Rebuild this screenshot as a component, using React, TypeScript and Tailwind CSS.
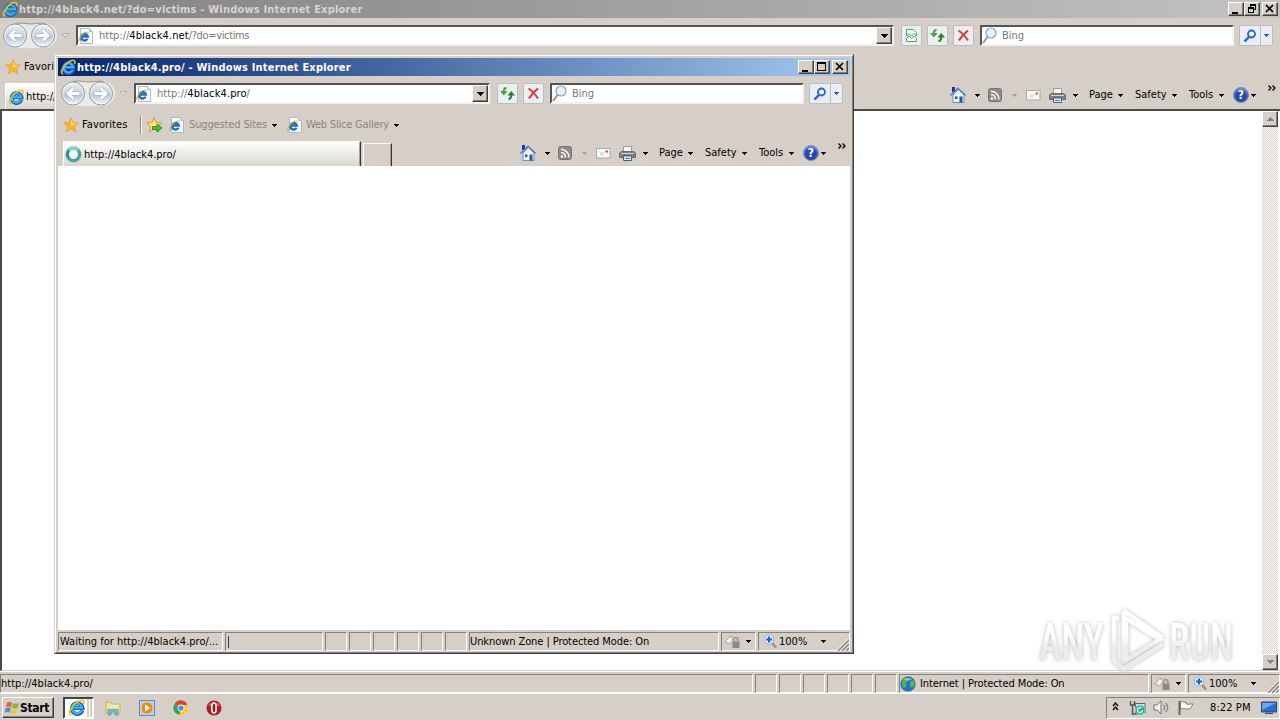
import type { ReactNode } from 'react';
import { clsx } from 'clsx';

const raised = 'border border-t-white border-l-white border-r-[#404040] border-b-[#404040] shadow-[inset_-1px_-1px_0_#808080]';
const field = 'border-2 border-t-[#555] border-l-[#555] border-r-[#f4f2ee] border-b-[#f4f2ee] bg-white';

function Caret({ className = 'text-black' }: { className?: string }) {
  return (
    <svg width="5" height="3" className={clsx('shrink-0', className)} shapeRendering="crispEdges">
      <path d="M0 0h5v1H4v1H3v1H2V2H1V1H0z" fill="currentColor" />
    </svg>
  );
}

function IeLogo({ size = 16 }: { size?: number }) {
  return (
    <svg width={size} height={size} viewBox="0 0 16 16" className="shrink-0">
      <path d="M13.4 10.6A5 5 0 1 1 13.6 8.4H5.4" fill="none" stroke="#1765b8" strokeWidth="3.8" />
      <path d="M12.800 10.800A4.700 4.700 0 1 1 13.200 8.300H5" fill="none" stroke="#45b4f0" strokeWidth="1.900" />
      <path d="M3.2 15C-.3 14.5 2 8.6 6.2 4.8 10 1.3 14 .2 14.8 2.2c.3.8.1 1.7-.4 2.6" fill="none" stroke="#e9bd26" strokeWidth="1.600" />
      <path d="M2 12.500C2.600 9.500 5 6 8 3.600" fill="none" stroke="#a3c94a" strokeWidth=".9" />
    </svg>
  );
}

function IePage() {
  return (
    <svg width="16" height="16" viewBox="0 0 16 16" className="shrink-0">
      <path d="M2.5.5h9l3 3v12h-12z" fill="#fff" stroke="#a9b8cc" />
      <path d="M11.5.5v3h3" fill="#dce6f2" stroke="#a9b8cc" />
      <path d="M9.500 10.800A3.300 3.300 0 1 1 9.800 8.600H3.500" fill="none" stroke="#1c6cc0" strokeWidth="2.400" />
      <path d="M1.200 13.600C-.4 12.600 3 6.600 6.500 4.700c2-1 3.800-1 3.800.6" fill="none" stroke="#d9ae2c" strokeWidth="1.200" />
    </svg>
  );
}

function StarIcon({ add = false }: { add?: boolean }) {
  return (
    <svg width="17" height="16" viewBox="0 0 17 16" className="shrink-0">
      <path d="M8 .8l2.1 4.8 5.2.5-3.9 3.5 1.2 5.2L8 12.1l-4.6 2.700 1.200-5.200L.7 6.100l5.200-.5z" fill={add ? '#fbe18a' : '#fdb62b'} stroke={add ? '#d98a12' : '#e0a040'} strokeWidth=".8" />
      <path d="M8 2.800l1.400 3.400 3.600.4-5 2z" fill="#ffe79a" />
      {add && <path d="M6.500 9.500H11V7l5 4-5 4v-2.500H6.500z" fill="#4cc03c" stroke="#23831e" strokeWidth=".8" />}
    </svg>
  );
}

function NavButtons() {
  return (
    <svg width="57" height="27" viewBox="0 0 57 27" className="shrink-0">
      <defs>
        <linearGradient id="nav" x1="0" y1="0" x2="0" y2="1">
          <stop offset="0" stopColor="#eef0f3" />
          <stop offset=".45" stopColor="#cdd5de" />
          <stop offset=".55" stopColor="#b4c4d5" />
          <stop offset="1" stopColor="#f4fafe" />
        </linearGradient>
      </defs>
      <path d="M13 1.500C22 .5 24 2 28.500 2S36 .5 43 1.500A12 12 0 0 1 43 25.500C36 26.500 20 26.500 13 25.500A12 12 0 0 1 13 1.500" fill="#eceae7" />
      <path d="M13 1.500C22 .5 24 2 28.500 2S36 .5 43 1.500" fill="none" stroke="#97948f" />
      {[13, 41].map((cx) => (
        <g key={cx}>
          <circle cx={cx} cy="13.500" r="11.500" fill="url(#nav)" stroke="#8f979f" />
          <circle cx={cx} cy="13.500" r="10.300" fill="none" stroke="#fff" strokeOpacity=".7" />
        </g>
      ))}
      <g fill="none" stroke="#a2b0c0" strokeWidth="4">
        <path d="M19.500 13.500H8.500M13 8.500l-5 5 5 5" />
        <path d="M34.500 13.500h11M41 8.500l5 5-5 5" />
      </g>
      <g fill="none" stroke="#fff" strokeWidth="2.800">
        <path d="M19.500 13.500H8.500M13 8.500l-5 5 5 5" />
        <path d="M34.500 13.500h11M41 8.500l5 5-5 5" />
      </g>
    </svg>
  );
}

function ToolButton({ children }: { children: ReactNode }) {
  return (
    <div className="flex h-[21px] w-[21px] shrink-0 items-center justify-center rounded-[2px] border border-[#b9bcc4] bg-[#eceef2]">
      {children}
    </div>
  );
}

function CompatIcon() {
  return (
    <svg width="13" height="15" viewBox="0 0 13 15">
      <path d="M1.500 8V1.500h7l3 3V8L9 5.500 6.500 8 4 5.500zM1.500 10.500L4 8l2.500 2.500L9 8l2.500 2.500v3h-10z" fill="#f4fff2" stroke="#4da455" />
    </svg>
  );
}

function RefreshIcon() {
  return (
    <svg width="15" height="13" viewBox="0 0 15 13">
      <path d="M6.500 1C4.500 1 3.800 2 3.800 5" fill="none" stroke="#3fa545" strokeWidth="2" />
      <path d="M0 4h7.500L3.800 8.500z" fill="#3fa545" />
      <path d="M8.500 12c2 0 2.700-1 2.700-4" fill="none" stroke="#23842b" strokeWidth="2" />
      <path d="M7.500 8.500H15L11.200 4z" fill="#23842b" />
    </svg>
  );
}

function StopIcon() {
  return (
    <svg width="13" height="13" viewBox="0 0 13 13">
      <path d="M1.500 1.500C4 3 8 7 11 11.500M11 1.500C8 4 4 8 2 11.500" fill="none" stroke="#d04045" strokeWidth="2" />
    </svg>
  );
}

function SearchIcon({ blue = false }: { blue?: boolean }) {
  return blue ? (
    <svg width="14" height="14" viewBox="0 0 14 14">
      <circle cx="8.500" cy="5" r="3.500" fill="#f6faff" stroke="#2c62cf" strokeWidth="1.800" />
      <path d="M6 7.800l-4.500 4.700" stroke="#2c62cf" strokeWidth="2.400" />
    </svg>
  ) : (
    <svg width="16" height="17" viewBox="0 0 16 17" className="shrink-0">
      <circle cx="9" cy="6" r="5" fill="#e3f3fb" stroke="#8fa0b0" strokeWidth="1.200" />
      <path d="M5.500 10L1 16" stroke="#999" strokeWidth="2" />
    </svg>
  );
}

function HomeIcon() {
  return (
    <svg width="16" height="16" viewBox="0 0 16 16" className="shrink-0">
      <path d="M3 8v7.500h11V8L8.500 2.500z" fill="#e9f3fc" stroke="#7490b4" />
      <path d="M2 0h3v5H2z" fill="#24339a" />
      <path d="M.5 8.500L8 1.500l7.500 7" fill="none" stroke="#5f80bd" strokeWidth="1.700" />
      <path d="M5 9.500h2.500V12H5zM9.500 9.500h3v6h-3z" fill="#2f5790" />
    </svg>
  );
}

function RssIcon() {
  return (
    <svg width="14" height="14" viewBox="0 0 14 14" className="shrink-0">
      <rect x=".5" y=".5" width="13" height="13" rx="2" fill="#8d8b88" stroke="#747474" />
      <circle cx="4" cy="10.500" r="1.300" fill="#fff" />
      <path d="M3 6.500A4.500 4.500 0 0 1 7.500 11.500M3 3.300a8 8 0 0 1 8 8.200" fill="none" stroke="#fff" strokeWidth="1.400" />
    </svg>
  );
}

function MailIcon() {
  return (
    <svg width="15" height="11" viewBox="0 0 15 11" className="shrink-0">
      <rect x=".5" y=".5" width="13.500" height="9.500" fill="#f8f8f6" stroke="#aaa9a6" />
      <path d="M9.500 2.500H12V4.500H9.500z" fill="#d4474f" />
      <path d="M4 5h4M4 7h3" stroke="#ccc" />
    </svg>
  );
}

function PrinterIcon() {
  return (
    <svg width="17" height="15" viewBox="0 0 17 15" className="shrink-0">
      <path d="M4.500.5h8V6h-8z" fill="#fafafa" stroke="#9a9a9a" />
      <path d="M.5 7l2-1.500h12l2 1.500v4.500H.5z" fill="#7d8084" stroke="#66696d" />
      <path d="M2 7.500h13" stroke="#d0d3d6" />
      <path d="M4.500 10h8v4.500h-8z" fill="#e8f1fa" stroke="#4c5c70" />
      <path d="M6 12.500h5" stroke="#4677a5" />
    </svg>
  );
}

function HelpIcon() {
  return (
    <span className="flex h-4 w-4 shrink-0 items-center justify-center rounded-full border border-[#7c8cb8] bg-[#2448ae] text-[12px] leading-none font-bold text-white shadow-[inset_0_1px_2px_#9db8f2]">
      ?
    </span>
  );
}

function WindowButton({ kind }: { kind: 'min' | 'max' | 'restore' | 'close' }) {
  return (
    <div className={clsx('h-[14px] w-4 bg-[#d5cfc7]', raised, kind === 'close' && 'ml-[2px]')}>
      <svg width="14" height="12" viewBox="0 0 14 12" shapeRendering={kind === 'close' ? 'auto' : 'crispEdges'}>
        {kind === 'min' && <path d="M3 9h6v2H3z" />}
        {kind === 'max' && <path d="M2 1h9v9H2zM3 3v6h7V3z" fillRule="evenodd" />}
        {kind === 'restore' && (
          <path d="M5 1h6v6H9V6h1V3H6v1H5zM3 4h6v6H3zM4 6v3h4V6z" fillRule="evenodd" />
        )}
        {kind === 'close' && <path d="M3 2l7 7M10 2L3 9" stroke="#000" strokeWidth="1.700" />}
      </svg>
    </div>
  );
}

interface BrowserProps {
  title: string;
  host: string;
  path: string;
  active?: boolean;
}

function TitleBar({ title, active }: { title: string; active?: boolean }) {
  return (
    <div
      className={clsx(
        'flex h-[18px] shrink-0 items-center bg-linear-to-r pr-[2px] pl-[2px]',
        active ? 'from-[#0a246a] to-[#a6caf0] text-white' : 'from-[#808080] to-[#c3c3c3] text-[#d8d4cc]'
      )}
    >
      <IeLogo />
      <span className="ml-px grow pt-px text-[11px] font-bold tracking-[0.19px] whitespace-nowrap">{title}</span>
      <WindowButton kind="min" />
      <WindowButton kind={active ? 'max' : 'restore'} />
      <WindowButton kind="close" />
    </div>
  );
}

function AddressRow({ host, path, active }: BrowserProps) {
  return (
    <div className="flex h-[35px] shrink-0 items-center pr-[7px] pl-[2px]">
      <NavButtons />
      <svg width="9" height="6" className="ml-[2px] shrink-0">
        <path d="M1 .5h7L4.500 4.500z" fill="#e5e2dc" stroke="#b3aea6" />
      </svg>
      <div className={clsx('ml-[6px] flex h-[21px] grow items-center', field)}>
        <IePage />
        <span className="ml-[5px] grow whitespace-nowrap text-[#777]">
          http://<span className="tracking-[0.1px] text-black">{host}</span>
          <span className="tracking-[-0.35px]">{path}</span>
        </span>
        <div className={clsx('flex h-[17px] w-4 items-center justify-center bg-[#d5cfc7]', raised)}>
          <svg width="7" height="4" shapeRendering="crispEdges">
            <path d="M0 0h7v1H6v1H5v1H4v1H3V3H2V2H1V1H0z" />
          </svg>
        </div>
      </div>
      <div className="mr-[6px] ml-[7px] flex gap-[5px]">
        {!active && <ToolButton><CompatIcon /></ToolButton>}
        <ToolButton><RefreshIcon /></ToolButton>
        <ToolButton><StopIcon /></ToolButton>
      </div>
      <div className={clsx('flex h-[21px] w-[254px] shrink-0 items-center', field)}>
        <SearchIcon />
        <span className="ml-[4px] text-[#777]">Bing</span>
      </div>
      <div className="ml-[5px] flex h-[21px] w-[34px] shrink-0 items-center rounded-[2px] border border-[#b9bcc4] bg-[#e9edf6]">
        <div className="flex h-full w-[21px] items-center justify-center border-r border-[#b9bcc4]"><SearchIcon blue /></div>
        <div className="flex grow justify-center"><Caret className="text-[#2c5cb8]" /></div>
      </div>
    </div>
  );
}

function FavoritesRow() {
  return (
    <div className="flex h-[28px] shrink-0 items-center pl-[5px] whitespace-nowrap">
      <StarIcon />
      <span className="ml-[2px] w-[46px] tracking-[0.1px]">Favorites</span>
      <div className="ml-[12px] h-[18px] w-[2px] border-l border-[#8d8984] bg-white" />
      <div className="ml-[4px]"><StarIcon add /></div>
      <div className="ml-[6px]"><IePage /></div>
      <span className="ml-[4px] w-[78px] tracking-[-0.13px] text-[#8a8681]">Suggested Sites</span>
      <div className="ml-[5px]"><Caret /></div>
      <div className="ml-[10px]"><IePage /></div>
      <span className="ml-[3px] w-[83px] tracking-[-0.2px] text-[#8a8681]">Web Slice Gallery</span>
      <div className="ml-[5px]"><Caret /></div>
    </div>
  );
}

function TabRow({ host, path, active }: BrowserProps) {
  return (
    <div className="flex h-[28px] shrink-0 items-end pl-[5px]">
      <div className="flex h-[26px] w-[298px] items-center border-t border-r border-l border-t-white border-l-white border-r-[#333] bg-linear-to-b from-white to-[#d9d4cd] pl-[2px] shadow-[inset_-1px_0_0_#a5a19b]">
        {active ? (
          <div className="mr-px h-[15px] w-[15px] shrink-0 rounded-full border-[3px] border-[#3fa5a0] border-t-[#85cbc8] border-l-[#2c8f8c] bg-[#eef9f8] shadow-[0_0_0_1px_#b7c9c8]" />
        ) : (
          <IeLogo />
        )}
        <span className="ml-[2px] whitespace-nowrap">http://{host}{path}</span>
      </div>
      <div className="ml-[2px] h-[24px] w-[29px] border-t border-r border-l border-t-white border-l-white border-r-[#333] shadow-[inset_-1px_0_0_#a5a19b]" />
      <div className="grow" />
      <div className="flex h-[28px] items-center pr-[4px]">
        <HomeIcon />
        <div className="ml-[9px]"><Caret /></div>
        <div className="ml-[8px]"><RssIcon /></div>
        <div className="ml-[10px]"><Caret className="text-[#aaa49c]" /></div>
        <div className="ml-[9px]"><MailIcon /></div>
        <div className="ml-[8px]"><PrinterIcon /></div>
        <div className="ml-[7px]"><Caret /></div>
        <span className="ml-[11px] w-[26px]">Page</span>
        <div className="ml-[3px]"><Caret /></div>
        <span className="ml-[12px] w-[33px]">Safety</span>
        <div className="ml-[4px]"><Caret /></div>
        <span className="ml-[12px] w-[27px]">Tools</span>
        <div className="ml-[3px]"><Caret /></div>
        <div className="ml-[9px]"><HelpIcon /></div>
        <div className="ml-[2px]"><Caret /></div>
        <svg width="8" height="6" className="mb-[14px] ml-[12px]">
          <path d="M.5.500L3 3 .500 5.500M4.500.500L7 3 4.500 5.500" fill="none" stroke="#000" strokeWidth="1.300" />
        </svg>
      </div>
    </div>
  );
}

function Toolbars(props: BrowserProps) {
  return (
    <>
      <TitleBar title={props.title} active={props.active} />
      <AddressRow {...props} />
      <FavoritesRow />
      <TabRow {...props} />
    </>
  );
}

function Pane({ className, children }: { className: string; children?: ReactNode }) {
  return (
    <div className={clsx('flex h-[19px] shrink-0 items-center border border-t-[#85817c] border-l-[#85817c] border-r-white border-b-white whitespace-nowrap', className)}>
      {children}
    </div>
  );
}

function StatusTail({ zone, icon }: { zone: string; icon?: ReactNode }) {
  return (
    <>
      {[0, 1, 2, 3, 4].map((i) => (
        <Pane key={i} className="w-[22px]" />
      ))}
      <Pane className="w-[22px] border-r-transparent" />
      <Pane className="w-[250px]">
        {icon}
        <span className="tracking-[-0.08px]">{zone} | Protected Mode: On</span>
      </Pane>
      <Pane className="w-[35px] pl-[2px]">
        <svg width="17" height="15" viewBox="0 0 17 15" className="shrink-0">
          <path d="M1 8l5-6 3 3-3 5zM6 3h5l2 3" fill="#f4f2ee" stroke="#aaa69f" />
          <rect x="8.500" y="7.500" width="7" height="6.500" fill="#8b8983" />
          <path d="M10 8V5.500a2 2 0 0 1 4 0V8" fill="none" stroke="#8b8983" strokeWidth="1.200" />
        </svg>
        <div className="ml-[5px]"><Caret /></div>
      </Pane>
      <Pane className="w-[92px] border-r-transparent pl-[4px]">
        <svg width="15" height="15" viewBox="0 0 15 15" className="shrink-0">
          <path d="M9 9l4 4.500" stroke="#a58f7c" strokeWidth="2.500" />
          <circle cx="6" cy="5.500" r="4.800" fill="#d9ecfb" stroke="#96b7d8" />
          <path d="M6 2.500v6M3 5.500h6" stroke="#1f62c8" strokeWidth="2" />
        </svg>
        <span className="ml-px w-[30px]">100%</span>
        <div className="ml-[13px]"><Caret /></div>
        <svg width="12" height="12" className="mt-[7px] ml-[11px] shrink-0">
          <path d="M1 12L12 1M5 12l7-7M9 12l3-3" stroke="#8a867f" strokeWidth="1.500" />
          <path d="M0 11L11 0M4 11l8-8M8 11l4-4" stroke="#fff" strokeWidth=".7" />
        </svg>
      </Pane>
    </>
  );
}

function ScrollButton({ up = false }: { up?: boolean }) {
  return (
    <div className={clsx('flex h-4 w-4 items-center justify-center bg-[#d5cfc7]', raised)}>
      <svg width="7" height="4" className={up ? '' : 'rotate-180'} shapeRendering="crispEdges">
        <path d="M3 0h1v1h1v1h1v1h1v1H0V3h1V2h1V1h1z" fill="#85817b" />
      </svg>
    </div>
  );
}

function Watermark() {
  return (
    <svg width="200" height="68" viewBox="0 0 200 68" className="absolute top-[606px] left-[1036px] drop-shadow-[0_0_2px_#bbb]">
      <defs>
        <linearGradient id="mark" gradientUnits="userSpaceOnUse" x1="0" y1="30" x2="0" y2="42">
          <stop offset="0" stopColor="#fff" />
          <stop offset="1" stopColor="#ececec" />
        </linearGradient>
      </defs>
      <g fill="url(#mark)" fontFamily="Roboto, sans-serif" fontSize="51" fontWeight="500">
        <text x="3" y="54" textLength="65" lengthAdjust="spacingAndGlyphs">ANY</text>
        <text x="133" y="54" textLength="64" lengthAdjust="spacingAndGlyphs">RUN</text>
      </g>
      <g fill="none" stroke="url(#mark)" strokeWidth="4.500">
        <path d="M90 16v38l34-20.500L88 11v44" />
        <path d="M83 12h-5v43l10 8 39-25" />
        <path d="M88 5v7M88 5l39 27" />
      </g>
    </svg>
  );
}

function TrayIcons() {
  return (
    <>
      <svg width="7" height="9" className="mb-[2px] ml-[5px]">
        <path d="M1 4l2.500-3L6 4M1 8l2.500-3L6 8" fill="none" stroke="#000" strokeWidth="1.300" />
      </svg>
      <svg width="17" height="16" viewBox="0 0 17 16" className="ml-[10px]">
        <path d="M1.500 1v4h4V1M3.500 5v9H8" fill="none" stroke="#555" strokeWidth="1.500" />
        <rect x="6.500" y="3.500" width="9.500" height="9" fill="#d2e3ea" stroke="#556b72" />
        <circle cx="11" cy="10" r="4.800" fill="#2ba79d" stroke="#83c9c1" />
        <path d="M13.500 10a2.500 2.500 0 1 1-1-2" fill="none" stroke="#e5fffc" strokeWidth="1.300" />
      </svg>
      <svg width="17" height="15" viewBox="0 0 17 15" className="ml-[7px]">
        <path d="M1 5h3l4-4v13l-4-4H1z" fill="#f5f5f3" stroke="#73706c" />
        <path d="M10.500 5c1.500 1.500 1.500 3.500 0 5M12.500 3c3 2.500 3 6.500 0 9" fill="none" stroke="#85827e" strokeWidth="1.200" />
      </svg>
      <svg width="17" height="16" viewBox="0 0 17 16" className="ml-[8px]">
        <path d="M1.500 1v14" stroke="#68655f" strokeWidth="2" />
        <path d="M2.500 2c3-1.500 4 1 6 .5V4c2 1 4-.5 6.500 0-1 2-2 4.500-4.500 5C8 9.500 7 8 2.500 9z" fill="#fbfbfa" stroke="#7a7772" />
      </svg>
    </>
  );
}

function Taskbar() {
  return (
    <div className="flex h-[26px] shrink-0 items-center pt-px pl-[2px]">
      <div className={clsx('flex h-[21px] w-[52px] items-center', raised)}>
        <svg width="17" height="16" viewBox="0 0 17 16" className="ml-px shrink-0">
          <path d="M3 2.500c2-1 3.500-1 5 0L7 7.200c-1.500-1-3-1-5 0z" fill="#e8692c" />
          <path d="M9 3c2 1 4 1 6 0l-1.300 4.700c-2 1-3.700 1-5.700 0z" fill="#82b83d" />
          <path d="M1.800 8.200c2-1 3.500-1 5 0l-1.200 4.600c-1.500-1-3-1-5 0z" fill="#4a8ed6" />
          <path d="M7.800 8.700c2 1 4 1 5.700 0l-1.300 4.700c-2 1-3.500 1-5.600 0z" fill="#f5c33a" />
        </svg>
        <span className="-ml-px text-[12px] font-bold tracking-[-0.3px]">Start</span>
      </div>
      <div className="ml-[9px] flex h-[22px] w-[31px] items-center border-2 border-t-[#444] border-r-white border-b-white border-l-[#444]">
        <div className="flex h-[18px] w-[22px] items-center justify-center bg-white"><IeLogo size={17} /></div>
        <div className="ml-[2px] h-[18px] w-px bg-white" />
      </div>
      <svg width="16" height="16" viewBox="0 0 16 16" className="ml-[11px]">
        <path d="M1 2h5l1 2h8v9H1z" fill="#f5dc83" stroke="#d2b25a" />
        <path d="M2.500 5h11v3h-11z" fill="#d9efc0" />
        <path d="M3 15V9.500h10V15h-3v-3H6v3z" fill="#73b7e2" stroke="#4c93c5" strokeWidth=".7" />
      </svg>
      <svg width="16" height="16" viewBox="0 0 16 16" className="ml-[18px]">
        <rect x=".5" y=".5" width="15" height="15" fill="#aed2f1" stroke="#5590cb" />
        <circle cx="8" cy="8" r="6" fill="#f08418" stroke="#f9c78c" />
        <path d="M6 4.500L11.500 8 6 11.500z" fill="#fff" />
      </svg>
      <svg width="16" height="16" viewBox="0 0 16 16" className="ml-[18px]">
        <path d="M8 8L1.500 4A7 7 0 0 1 14.300 5z" fill="#dc4335" />
        <path d="M8 8L1.500 4a7 7 0 0 0 5 10.800z" fill="#30a352" />
        <path d="M8 5h6.300A7 7 0 0 1 7 15z" fill="#f8ca34" />
        <circle cx="8" cy="8" r="3.400" fill="#fff" />
        <circle cx="8" cy="8" r="2.600" fill="#4387e8" />
      </svg>
      <svg width="16" height="16" viewBox="0 0 16 16" className="ml-[17px]">
        <circle cx="8" cy="8" r="7.500" fill="#b51a20" />
        <path d="M2 6a6.300 5 0 0 1 12 0z" fill="#d86060" />
        <ellipse cx="8" cy="8" rx="2.200" ry="5" fill="#9c1015" stroke="#fff" strokeWidth="1.700" />
      </svg>
      <div className="grow" />
      <div className="flex h-[22px] w-[174px] items-center border border-t-[#85817c] border-r-white border-b-white border-l-[#85817c] whitespace-nowrap">
        <TrayIcons />
        <span className="ml-[15px] w-[40px] tracking-[0.1px]">8:22 PM</span>
        <svg width="16" height="14" viewBox="0 0 16 14" className="ml-[11px] shrink-0">
          <path d="M.5 1h15v10H.5z" fill="#2d6bcb" stroke="#264878" />
          <path d="M1 2h14L1 9z" fill="#6ca4e9" />
          <path d="M4 12.500h8" stroke="#374d6d" />
        </svg>
      </div>
    </div>
  );
}

function PopupWindow() {
  return (
    <div className="absolute top-[54px] left-[54px] h-[600px] w-[800px] border border-[#d5cfc7] border-r-[#404040] border-b-[#404040] bg-[#d5cfc7]">
      <div className="flex h-full flex-col border border-t-white border-r-[#808080] border-b-[#808080] border-l-white px-[2px] pt-[2px]">
        <Toolbars title="http://4black4.pro/ - Windows Internet Explorer" host="4black4.pro" path="/" active />
        <div className="z-10 -mt-px h-[464px] shrink-0 bg-white" />
        <div className="flex h-[21px] shrink-0 items-end gap-[2px]">
          <Pane className="w-[165px] pl-px">Waiting for http://4black4.pro/...</Pane>
          <Pane className="w-[98px] pl-[2px]">
            <div className="h-[12px] w-px bg-[#2a3a8a]" />
          </Pane>
          <StatusTail zone="Unknown Zone" />
        </div>
      </div>
    </div>
  );
}

export default function App() {
  return (
    <div className="relative flex h-[720px] w-[1280px] flex-col overflow-hidden bg-[#d5cfc7] font-['DejaVu_Sans_Condensed','DejaVu_Sans',sans-serif] text-[11px] leading-[14px] text-black [font-stretch:condensed]">
      <Toolbars title="http://4black4.net/?do=victims - Windows Internet Explorer" host="4black4.net" path="/?do=victims" />
      <div className="flex h-[562px] shrink-0 justify-end border-t-2 border-b border-l-2 border-t-[#4c4a48] border-b-[#cfcac3] border-l-[#4c4a48] bg-white pr-[2px]">
        <div className="flex w-4 flex-col justify-between bg-[#ebe8e4] bg-[repeating-conic-gradient(#d5cfc7_0_25%,#fff_0_50%)] bg-[length:2px_2px]">
          <ScrollButton up />
          <ScrollButton />
        </div>
      </div>
      <div className="flex h-[23px] shrink-0 items-end gap-[2px] border-t border-b border-white">
        <Pane className="w-[753px]">http://4black4.pro/</Pane>
        <StatusTail
          zone="Internet"
          icon={
            <svg width="16" height="16" viewBox="0 0 16 16" className="mr-[4px]">
              <circle cx="8" cy="8" r="7.300" fill="#2276c6" stroke="#3e5f7c" strokeWidth=".6" />
              <path d="M3 3c3-2 5-1 5 1S5 6 6 8s-1 4-2 4-3-4-1-9M10 6l4-2 1 4-3 4-2-2z" fill="#55b548" />
              <path d="M4 3c2-1.500 6-1.500 8 0-2 2-6 2-8 0" fill="#fff" opacity=".45" />
            </svg>
          }
        />
      </div>
      <Taskbar />
      <Watermark />
      <PopupWindow />
    </div>
  );
}
